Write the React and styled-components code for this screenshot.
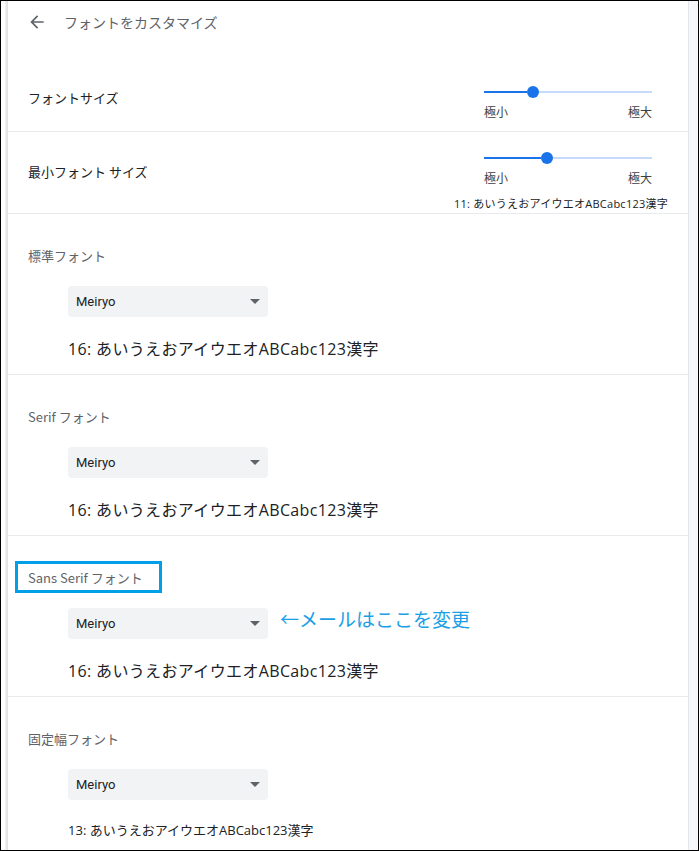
import React from 'react';
import styled, { createGlobalStyle } from 'styled-components';

const GlobalStyle = createGlobalStyle`
  html, body {
    margin: 0;
    padding: 0;
    background: #fff;
  }
  body {
    font-family: 'Noto Sans CJK JP', 'Noto Sans', sans-serif;
    color: #202124;
  }
`;

const Frame = styled.div`
  width: 699px;
  height: 851px;
  box-sizing: border-box;
  border: 1px solid #000;
  display: flex;
  overflow: hidden;
  background: #fff;
`;

const Gutter = styled.div`
  width: 4px;
  flex: none;
`;

const Shade = styled.div`
  width: 3px;
  flex: none;
  background: linear-gradient(to right, #f3f3f3, #dedede);
`;

const Card = styled.main`
  width: 680px;
  flex: none;
  display: flex;
  flex-direction: column;
`;

const Rail = styled.div`
  flex: 1;
  border-left: 1px solid #e4e6ea;
  background: #f5f7fa;
`;

const Header = styled.header`
  flex: none;
  height: 42px;
  margin-bottom: 23px;
  padding-left: 19px;
  display: flex;
  align-items: center;
`;

const BackButton = styled.button`
  border: 0;
  background: none;
  padding: 0;
  width: 20px;
  height: 20px;
  color: #5f6368;
  display: flex;
  margin-right: 17px;
  cursor: pointer;
`;

const Title = styled.h1`
  margin: 0;
  font-size: 14px;
  font-weight: 400;
  color: #5f6368;
`;

const SizeRow = styled.section`
  flex: none;
  min-height: ${(p) => p.$h}px;
  padding: 0 20px;
  display: flex;
  justify-content: space-between;
  align-items: center;
  border-bottom: 1px solid #e8eaed;
`;

const RowLabel = styled.div`
  margin-top: -2px;
  font-size: 13px;
  line-height: 20px;
  color: #202124;
`;

const Controls = styled.div`
  align-self: flex-start;
  padding-top: 16px;
  display: flex;
  flex-direction: column;
  align-items: flex-end;
`;

const SliderBox = styled.div`
  width: 168px;
  margin-right: 16px;
`;

const Track = styled.div`
  height: 20px;
  display: flex;
  align-items: center;
`;

const Filled = styled.div`
  height: 2px;
  background: #1a73e8;
  flex: none;
`;

const Knob = styled.div`
  width: 12px;
  height: 12px;
  border-radius: 50%;
  background: #1a73e8;
  flex: none;
`;

const Rest = styled.div`
  height: 2px;
  flex: 1;
  background: #c6dafc;
`;

const Ends = styled.div`
  margin-top: 2px;
  display: flex;
  justify-content: space-between;
  font-size: 12px;
  line-height: 16px;
  color: #3c4043;
`;

const MiniSample = styled.div`
  margin-top: 10px;
  font-family: 'Open Sans', 'Noto Sans CJK JP', sans-serif;
  font-size: 11px;
  line-height: 16px;
  letter-spacing: 0.25px;
  color: #202124;
  white-space: nowrap;
`;

const FontSection = styled.section`
  flex: none;
  padding: 32px 20px 13px;
  display: flex;
  flex-direction: column;
  align-items: flex-start;
  border-bottom: 1px solid #e8eaed;
`;

const SectionLabel = styled.div`
  position: relative;
  font-size: 13px;
  line-height: 20px;
  color: #5f6368;

  ${(p) => p.$marked && `
    &::after {
      content: '';
      position: absolute;
      left: -13px;
      right: -19px;
      top: -7px;
      bottom: -5px;
      border: 3px solid #00a0e9;
    }
  `}
`;

const SelectRow = styled.div`
  margin-top: 20px;
  margin-left: 40px;
  display: flex;
  align-items: flex-start;
`;

const Select = styled.div`
  width: 200px;
  height: 31px;
  box-sizing: border-box;
  padding: 0 8px;
  border-radius: 4px;
  background: #f1f3f4;
  display: flex;
  align-items: center;
  justify-content: space-between;
  font-family: Roboto, 'Noto Sans', sans-serif;
  font-size: 13px;
  color: #202124;
`;

const Caret = styled.span`
  width: 0;
  height: 0;
  border-left: 5px solid transparent;
  border-right: 5px solid transparent;
  border-top: 5px solid #5f6368;
`;

const Note = styled.span`
  margin-left: 12px;
  margin-top: -2px;
  font-size: 19px;
  line-height: 26px;
  color: #1a9fe6;
  white-space: nowrap;
`;

const Sample = styled.div`
  margin-top: 20px;
  margin-left: 40px;
  font-family: 'Open Sans', 'Noto Sans CJK JP', sans-serif;
  font-size: ${(p) => p.$size}px;
  line-height: ${(p) => (p.$size > 14 ? 24 : 20)}px;
  letter-spacing: ${(p) => (p.$size > 14 ? 0.35 : 0)}px;
  color: #202124;
  white-space: nowrap;
`;

const SAMPLE = 'あいうえおアイウエオABCabc123漢字';

const Slider = ({ knobAt }) => (
  <SliderBox>
    <Track>
      <Filled style={{ width: knobAt - 6 }} />
      <Knob />
      <Rest />
    </Track>
    <Ends>
      <span>極小</span>
      <span>極大</span>
    </Ends>
  </SliderBox>
);

const fontSections = [
  { label: '標準フォント', size: 16 },
  { label: 'Serif フォント', size: 16 },
  { label: 'Sans Serif フォント', size: 16, marked: true, note: '←メールはここを変更' },
  { label: '固定幅フォント', size: 13 },
];

const App = () => (
  <>
    <GlobalStyle />
    <Frame>
      <Gutter />
      <Shade />
      <Card>
        <Header>
          <BackButton aria-label="戻る">
            <svg width="20" height="20" viewBox="0 0 24 24" fill="currentColor">
              <path d="M20 11H7.83l5.59-5.59L12 4l-8 8 8 8 1.41-1.41L7.83 13H20v-2z" />
            </svg>
          </BackButton>
          <Title>フォントをカスタマイズ</Title>
        </Header>

        <SizeRow $h={65}>
          <RowLabel>フォントサイズ</RowLabel>
          <Controls>
            <Slider knobAt={49} />
          </Controls>
        </SizeRow>

        <SizeRow $h={81}>
          <RowLabel>最小フォント サイズ</RowLabel>
          <Controls>
            <Slider knobAt={63} />
            <MiniSample>11: {SAMPLE}</MiniSample>
          </Controls>
        </SizeRow>

        {fontSections.map((s) => (
          <FontSection key={s.label}>
            <SectionLabel $marked={s.marked}>{s.label}</SectionLabel>
            <SelectRow>
              <Select>
                <span>Meiryo</span>
                <Caret />
              </Select>
              {s.note && <Note>{s.note}</Note>}
            </SelectRow>
            <Sample $size={s.size}>
              {s.size}: {SAMPLE}
            </Sample>
          </FontSection>
        ))}
      </Card>
      <Rail />
    </Frame>
  </>
);

export default App;
